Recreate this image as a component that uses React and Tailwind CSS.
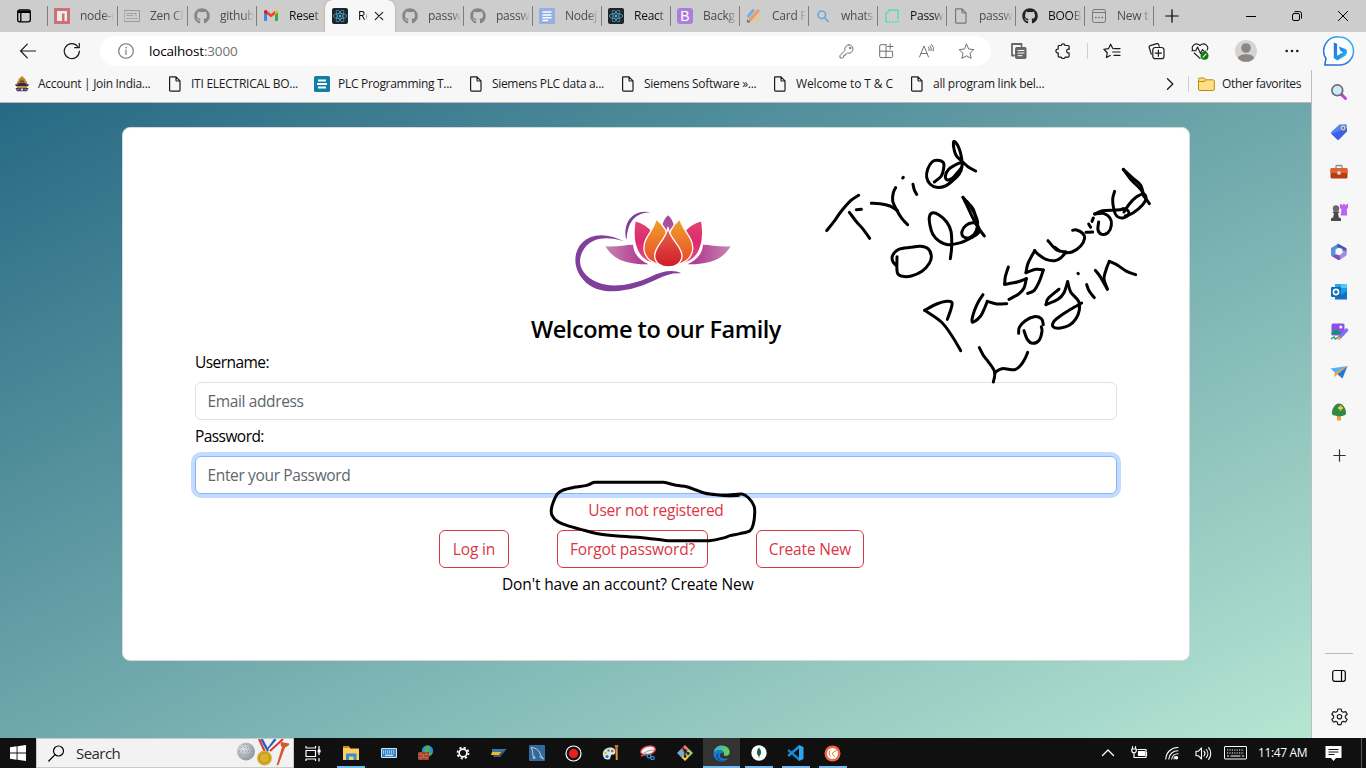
import React from "react";
import { FaGithub, FaReact } from "react-icons/fa";

/* Shared line-icon wrapper */
function Icon({ size = 16, box = 16, sw = 1, className = "", children }) {
  return (
    <svg
      width={size}
      height={size}
      viewBox={`0 0 ${box} ${box}`}
      fill="none"
      stroke="currentColor"
      strokeWidth={sw}
      strokeLinecap="round"
      strokeLinejoin="round"
      className={`shrink-0 ${className}`}
    >
      {children}
    </svg>
  );
}

const DocIcon = ({ className = "" }) => (
  <Icon sw={1.2} className={className}>
    <path d="M3 .8h6l4 4v9.4a1 1 0 0 1-1 1H3.600a1 1 0 0 1-1-1V1.600a.8.8 0 0 1 .4-.8zM9 .8v3.400a.8.8 0 0 0 .8.8H13" />
  </Icon>
);

/* ---------- tab favicons ---------- */
const Npm = () => (
  <Icon className="opacity-60">
    <path d="M0 0h16v16H0z" fill="#cb3837" stroke="none" />
    <path d="M3 3h10v10h-2.500V5.500H8V13H3z" fill="#fff" stroke="none" />
  </Icon>
);
const Zen = () => (
  <Icon className="text-[#999]">
    <rect x=".5" y="2.500" width="15" height="11" />
    <path d="M3 5.500h2M3 7.500h2M6.500 5.500h2M6.500 7.500h2M10 5.500h2v2M3 10.500h1.500M6 10.500h1M8.500 10.500H10M11.500 10.500H13" />
  </Icon>
);
const Git = () => <FaGithub className="h-4 w-4 text-[#858585]" />;
const GitDark = () => <FaGithub className="h-4 w-4 text-[#1f2328]" />;
const Gmail = () => (
  <Icon>
    <g stroke="none">
      <path d="M1 3.500l3 2.200V13H2a1 1 0 0 1-1-1z" fill="#4285f4" />
      <path d="M12 5.700l3-2.200V12a1 1 0 0 1-1 1h-2z" fill="#34a853" />
      <path d="M1 4c0-1.700 1.700-2.200 3-1.200L8 5.900l4-3.100v3.400L8 9.300 1 4.300z" fill="#ea4335" />
      <path d="M12 2.800c1.300-1 3-.5 3 1.200v.6l-3 2.100z" fill="#fbbc04" />
      <path d="M1 4c0-1.500 1.700-2.200 3-1.200v3.900L1 4.500z" fill="#c5221f" />
    </g>
  </Icon>
);
const ReactFav = () => (
  <span className="flex h-4 w-4 shrink-0 items-center justify-center rounded-[2px] bg-[#20232a]">
    <FaReact className="h-3.5 w-3.5 text-[#4fb8d4]" />
  </span>
);
const Docs = () => (
  <Icon sw={1.500}>
    <rect width="16" height="16" rx="1.500" fill="#93afe3" stroke="none" />
    <path d="M3.500 4h9M3.500 7h9M3.500 9.800h9M3.500 12.500h5.500" stroke="#fff" strokeLinecap="butt" />
  </Icon>
);
const Boot = () => (
  <span className="flex h-4 w-4 shrink-0 items-center justify-center rounded-[3px] bg-[#ab7edc] font-['Liberation_Sans',sans-serif] text-[14px] leading-none text-white">
    B
  </span>
);
const CardFav = () => (
  <Icon sw={3.200}>
    <path d="M2.500 8l4.500-5.500" stroke="#79aee0" />
    <path d="M4 12l8-9" stroke="#f09a63" />
    <path d="M8.500 13.500l3.500-3.700" stroke="#edc78f" />
    <path d="M1 11.200l3.300 3.300H2a1 1 0 0 1-1-1z" fill="#5a5a86" stroke="none" />
  </Icon>
);
const SearchFav = () => (
  <Icon sw={1.700} className="text-[#74a6d3]">
    <circle cx="6.800" cy="6.800" r="3.800" />
    <path d="M9.800 9.800l3.400 3.600" />
  </Icon>
);
const GreenFav = () => (
  <Icon sw={2} className="text-[#6bdcab]">
    <path d="M2 14V5.500L5.500 2H14v8" strokeDasharray="5 .6" strokeLinecap="butt" />
    <path d="M2 14h12v-4" strokeDasharray="1.500 1.500" strokeLinecap="butt" />
  </Icon>
);
const NewTab = () => (
  <Icon className="text-[#777]">
    <rect x="1.500" y="1.500" width="13" height="13" rx="2" />
    <path d="M1.500 4.500h13" />
    <path d="M4.500 9.500h.6M7.700 9.500h.6M10.900 9.500h.6" strokeWidth="1.500" />
  </Icon>
);

const tabs = [
  { icon: <Npm />, text: "node-c", w: "w-[70px]", sep: true },
  { icon: <Zen />, text: "Zen Cl", w: "w-[70px]", sep: true },
  { icon: <Git />, text: "github", w: "w-[69px]", sep: true },
  { icon: <Gmail />, text: "Reset", w: "w-[69px]", sep: true, live: true },
  { icon: <ReactFav />, text: "Re", w: "w-[70px]", active: true },
  { icon: <Git />, text: "passw", w: "w-[68px]" },
  { icon: <Git />, text: "passw", w: "w-[69px]", sep: true },
  { icon: <Docs />, text: "Nodej", w: "w-[69px]", sep: true },
  { icon: <ReactFav />, text: "React", w: "w-[69px]", sep: true, live: true },
  { icon: <Boot />, text: "Backg", w: "w-[69px]", sep: true },
  { icon: <CardFav />, text: "Card F", w: "w-[69px]", sep: true },
  { icon: <SearchFav />, text: "whats", w: "w-[69px]", sep: true },
  { icon: <GreenFav />, text: "Passw", w: "w-[69px]", sep: true, live: true },
  { icon: <DocIcon className="text-[#777]" />, text: "passw", w: "w-[69px]", sep: true },
  { icon: <GitDark />, text: "BOOB", w: "w-[69px]", sep: true, live: true },
  { icon: <NewTab />, text: "New t", w: "w-[69px]", sep: true },
];

function Tab({ tab }) {
  if (tab.active) {
    return (
      <div className="flex h-8 w-[70px] shrink-0 items-center rounded-t-lg bg-[#f7f7f7] pl-[7px] shadow-[0_0_2px_#999]">
        {tab.icon}
        <span className="ml-2.5 w-[13px] whitespace-nowrap text-[12px] tracking-[-0.2px] text-black [mask-image:linear-gradient(to_right,#000_45%,transparent_75%)]">
          {tab.text}
        </span>
        <Icon size={10} box={10} sw={1.200} className="ml-[3px] text-[#222]">
          <path d="M1.300 1.300l7.400 7.400M8.700 1.300L1.300 8.700" />
        </Icon>
      </div>
    );
  }
  return (
    <div className={`flex h-8 shrink-0 items-center ${tab.w}`}>
      <span className={`h-5 w-px ${tab.sep ? "bg-[#7d7d7d]" : "bg-transparent"}`} />
      <span className="ml-1.5 flex">{tab.icon}</span>
      <span
        className={`ml-2.5 w-[36px] whitespace-nowrap text-[12px] tracking-[-0.25px] [mask-image:linear-gradient(to_right,#000_65%,transparent_95%)] ${
          tab.live ? "text-[#111]" : "text-[#4c4c4c]"
        }`}
      >
        {tab.text}
      </span>
    </div>
  );
}

function TabStrip() {
  return (
    <div className="flex h-8 items-center bg-[#cdcdcd] text-[#222]">
      <div className="flex w-[47px] shrink-0 justify-center">
        <Icon sw={1.300} className="text-black">
          <rect x="1.700" y="1.800" width="12.600" height="12" rx="2" />
          <path d="M2 3.700h12" strokeWidth="2.600" strokeLinecap="butt" />
          <path d="M4.800 5v8.500" />
        </Icon>
      </div>
      {tabs.map((t, i) => (
        <Tab key={i} tab={t} />
      ))}
      <span className="h-5 w-px shrink-0 bg-[#7d7d7d]" />
      <Icon size={14} box={14} sw={1.200} className="ml-[11px] text-black">
        <path d="M7 .8v12.400M.8 7h12.400" />
      </Icon>
      <div className="ml-auto flex items-center gap-[36px] pr-[18px] text-black">
        <Icon size={10} box={10}>
          <path d="M0 5.500h10" />
        </Icon>
        <Icon size={10} box={10}>
          <rect x=".5" y="2.500" width="7" height="7" rx="1.500" />
          <path d="M2.800.6h4.700a2 2 0 0 1 2 2v4.600" />
        </Icon>
        <Icon size={10} box={10}>
          <path d="M.3.300l9.400 9.400M9.700.3L.3 9.700" />
        </Icon>
      </div>
    </div>
  );
}

/* ---------- address bar row ---------- */
const Cell = ({ children, w = "w-10" }) => (
  <span className={`flex shrink-0 items-center justify-center ${w}`}>{children}</span>
);

function BingLogo() {
  return (
    <svg width="32" height="32" viewBox="0 0 32 32" className="shrink-0">
      <defs>
        <linearGradient id="bingRing" x1="0" y1="1" x2="1" y2="0">
          <stop offset="0" stopColor="#2b62cf" />
          <stop offset=".5" stopColor="#2e86e8" />
          <stop offset="1" stopColor="#35c0f3" />
        </linearGradient>
        <linearGradient id="bingB" x1="0" y1="0" x2="1" y2="1">
          <stop offset="0" stopColor="#2a6be0" />
          <stop offset=".6" stopColor="#2295ee" />
          <stop offset="1" stopColor="#43d3f3" />
        </linearGradient>
      </defs>
      <path d="M16.500 2a14 14 0 1 1 0 28H1.800l1.200-6.500A14 14 0 0 1 16.500 2z" fill="#fdfeff" stroke="url(#bingRing)" strokeWidth="1.500" strokeLinejoin="round" />
      <path d="M10.800 7.500l3.300 1.200v12l6-3.400-2.600-1.300-1.800-4.400 6.700 2.500c2.500 1.200 2.200 5.300-.5 6.900l-7.600 4.400-3.500-2.400z" fill="url(#bingB)" />
    </svg>
  );
}

function Toolbar() {
  return (
    <div className="flex h-[38px] items-center bg-[#f7f7f7] text-[#1b1b1b]">
      <Cell w="w-14">
        <Icon size={16} sw={1.200}>
          <path d="M15.500 8H.8M7.300 1.200L.6 8l6.700 6.800" />
        </Icon>
      </Cell>
      <Cell w="w-8">
        <Icon size={18} box={18} sw={1.200}>
          <path d="M16.300 9.200A7.500 7.500 0 1 1 14.700 4.500M16.300 1.300v4.400h-4.600" />
        </Icon>
      </Cell>
      <div className="ml-3 flex h-[30px] w-[891px] shrink-0 items-center rounded-full bg-white text-[#707070]">
        <Icon size={16} sw={1.100} className="ml-[18px]">
          <circle cx="8" cy="8" r="7.300" />
          <path d="M8 7v4.500" />
          <path d="M8 4.500v.3" strokeWidth="1.400" />
        </Icon>
        <span className="ml-[15px] text-[13.5px] tracking-[-0.18px]">
          <span className="text-black">localhost</span>:3000
        </span>
        <div className="ml-auto flex pr-[5px]">
          <Cell>
            <Icon size={15} box={15}>
              <path d="M9.800.8a4.200 4.200 0 1 1-1.300 8.200L7.300 10.200H6v1.500H4.500v1.400L3.600 14H1v-2.500l5-5.200A4.200 4.200 0 0 1 9.800.8z" />
              <circle cx="11" cy="4" r=".8" />
            </Icon>
          </Cell>
          <Cell>
            <Icon>
              <path d="M8 1.700H3a1.300 1.300 0 0 0-1.300 1.300v10.300A1.300 1.300 0 0 0 3 14.600h10.300a1.300 1.300 0 0 0 1.300-1.300V8.200H1.700M8 1.700v12.900M12.200.8v5.400M9.500 3.500h5.400" />
            </Icon>
          </Cell>
          <Cell>
            <Icon size={17} box={17}>
              <path d="M1.500 14L6 3l4.500 11M3 10.500h6M10.500 4.200a3 3 0 0 1 .5 3.500M12 2.800a5 5 0 0 1 1 5M13.700 1.500a7 7 0 0 1 1.600 6.500" />
            </Icon>
          </Cell>
          <Cell>
            <Icon size={17} box={17}>
              <path d="M8.500 1.200l2.200 4.800 5.200.6-3.900 3.600 1.100 5.200-4.600-2.600-4.600 2.600L5 10.200 1.100 6.600 6.300 6z" />
            </Icon>
          </Cell>
        </div>
      </div>
      <Cell w="w-14">
        <Icon size={16} className="text-[#666]">
          <path d="M3 12.500H1V1h9.500v2" strokeWidth="1.800" />
          <rect x="4.500" y="4.500" width="10.500" height="11" rx="1" fill="#666" />
          <path d="M7 7.500h6M7 10h6M7 12.700h4" stroke="#fff" />
        </Icon>
      </Cell>
      <Cell w="w-8">
        <Icon size={16} sw={1.200}>
          <path d="M3.200 4.200V3.500a1 1 0 0 1 1-1h2a2 2 0 0 1 3.900 0h3a1 1 0 0 1 1 1v2.800a1.900 1.900 0 1 0 0 3.600v3.200a1 1 0 0 1-1 1h-3a2 2 0 0 1-3.900 0h-2a1 1 0 0 1-1-1v-3.200a1.900 1.900 0 1 1 0-3.700z" />
        </Icon>
      </Cell>
      <span className="mx-[8px] h-4 w-px bg-[#cfcfcf]" />
      <Cell w="w-8">
        <Icon size={18} box={18} sw={1.200}>
          <path d="M9.800 6.500L7.600 2.200 5.500 6.700l-4.700.6 3.500 3.400-.9 4.900 3.800-2.200M11 6.700h6M9.700 10h7.300M11 13.400h6" />
        </Icon>
      </Cell>
      <Cell w="w-14">
        <Icon size={17} box={17} sw={1.200}>
          <path d="M3.300 11.200L1.200 4.500a1.500 1.500 0 0 1 1-1.900l6.600-2a1.500 1.500 0 0 1 1.900 1l.5 1.700" />
          <rect x="4.800" y="4.500" width="11.200" height="11.200" rx="2.500" />
          <path d="M10.400 7.200v6M7.400 10.200h6" />
        </Icon>
      </Cell>
      <Cell w="w-8">
        <Icon size={18} box={18} sw={1.100}>
          <path d="M1.800 8C-.3 4 4.500-.3 9 3.500 13.500-.3 18.300 4 16.200 8M3.200 11L9 16.300M.8 8.800h4L6.600 5l2.900 6.500 2-4 1.300 1.800H15" />
          <circle cx="13.500" cy="13.700" r="4" fill="#107c10" stroke="none" />
          <path d="M12 15.200l3-3" stroke="#fff" />
        </Icon>
      </Cell>
      <Cell w="w-[60px]">
        <svg width="22" height="22" viewBox="0 0 22 22">
          <circle cx="11" cy="11" r="11" fill="#d6d4d1" />
          <circle cx="11" cy="8" r="4.800" fill="#8a8784" />
          <path d="M2.800 18.200C4 13 18 13 19.200 18.200A11 11 0 0 1 2.800 18.200z" fill="#8a8784" />
        </svg>
      </Cell>
      <Cell w="w-8">
        <Icon size={14} box={14}>
          <g fill="#1b1b1b" stroke="none">
            <circle cx="1.700" cy="7" r="1.300" />
            <circle cx="7" cy="7" r="1.300" />
            <circle cx="12.300" cy="7" r="1.300" />
          </g>
        </Icon>
      </Cell>
      <div className="ml-auto flex pr-[11px]">
        <BingLogo />
      </div>
    </div>
  );
}

/* ---------- favourites bar ---------- */
const Crest = () => (
  <Icon>
    <g stroke="none">
      <path d="M7 .5h2l1 2h1.500L11 4.500h1l1.500 3.500h-11L4 4.500h1L4.500 2.500H6z" fill="#b7832b" />
      <path d="M6 4.500h4v2H6z" fill="#6f4b1c" />
      <path d="M1 8.200h2.500L5 7h6l1.500 1.200H15l-1 2H2z" fill="#2b2a5a" />
      <path d="M3 10h10v2H3z" fill="#c38d31" />
      <path d="M1.500 12h13l-1.500 3.200H3z" fill="#3f3b6b" />
      <path d="M3.500 13h2v1h-2zM10.500 13h2v1h-2z" fill="#c77" />
      <path d="M7 12.500h2v2H7z" fill="#ddd" />
    </g>
  </Icon>
);
const PlcIcon = () => (
  <Icon sw={1.800}>
    <rect width="16" height="16" rx="1.500" fill="#0f7fa8" stroke="none" />
    <path d="M4 4.500h8M3 8h10M4 11.500h8" stroke="#fff" strokeLinecap="butt" />
  </Icon>
);

const bookmarks = [
  { icon: <Crest />, text: "Account | Join India...", w: "w-[153px]", t: "tracking-[-0.3px]" },
  { icon: <DocIcon />, text: "ITI ELECTRICAL BO...", w: "w-[147px]", t: "tracking-[-0.25px]" },
  { icon: <PlcIcon />, text: "PLC Programming T...", w: "w-[154px]", t: "tracking-[-0.3px]" },
  { icon: <DocIcon />, text: "Siemens PLC data a...", w: "w-[152px]", t: "tracking-[-0.33px]" },
  { icon: <DocIcon />, text: "Siemens Software »...", w: "w-[152px]", t: "tracking-[-0.3px]" },
  { icon: <DocIcon />, text: "Welcome to T & C", w: "w-[137px]", t: "tracking-[-0.1px]" },
  { icon: <DocIcon />, text: "all program link bel...", w: "w-[153px]", t: "tracking-[-0.25px]" },
];

function Bookmarks() {
  return (
    <div className="flex h-[33px] items-center border-b border-[#b9b9b9] bg-[#f7f7f7] pb-1 pl-[14px] text-[12px] text-[#1b1b1b]">
      {bookmarks.map((b) => (
        <div key={b.text} className={`flex shrink-0 items-center gap-2 whitespace-nowrap ${b.w} ${b.t}`}>
          {b.icon}
          <span>{b.text}</span>
        </div>
      ))}
      <div className="ml-auto flex items-center">
        <Icon size={12} box={12} sw={1.300}>
          <path d="M3.500.8L8.800 6l-5.300 5.200" />
        </Icon>
        <span className="ml-[12px] h-4 w-px bg-[#cfcfcf]" />
        <svg width="17" height="16" viewBox="0 0 17 16" className="ml-[9px]">
          <path d="M.5 3.500a1.500 1.500 0 0 1 1.500-1.500h4l1.800 1.800h7a1.500 1.500 0 0 1 1.500 1.500v7.700a1.500 1.500 0 0 1-1.500 1.500H2a1.500 1.500 0 0 1-1.500-1.500z" fill="#ffdf82" stroke="#b98a16" />
          <path d="M.8 5.500h5.500l1.600-1.500" fill="#f0bd3f" stroke="#b98a16" />
        </svg>
        <span className="ml-[7px] w-[89px] whitespace-nowrap tracking-[-0.35px]">Other favorites</span>
      </div>
    </div>
  );
}

/* ---------- login page ---------- */
function Lotus() {
  return (
    <svg width="190" height="110" viewBox="0 0 570 330" className="mx-auto -translate-x-px">
      <defs>
        <linearGradient id="red" x1="0" y1="0" x2="0" y2="1">
          <stop offset="0" stopColor="#e8664a" />
          <stop offset="1" stopColor="#cf1a2c" />
        </linearGradient>
        <linearGradient id="orange" x1="0" y1="0" x2="0" y2="1">
          <stop offset="0" stopColor="#f0a32a" />
          <stop offset="1" stopColor="#e9472b" />
        </linearGradient>
        <linearGradient id="pink" x1="0" y1="0" x2="0" y2="1">
          <stop offset="0" stopColor="#e2456f" />
          <stop offset=".5" stopColor="#dc2a70" />
          <stop offset="1" stopColor="#dd4f7f" />
        </linearGradient>
        <linearGradient id="leafL" x1="0" y1="0" x2="1" y2="0">
          <stop offset="0" stopColor="#c685b5" />
          <stop offset="1" stopColor="#ae2c87" />
        </linearGradient>
        <linearGradient id="leafR" x1="1" y1="0" x2="0" y2="0">
          <stop offset="0" stopColor="#c685b5" />
          <stop offset="1" stopColor="#ae2c87" />
        </linearGradient>
        <linearGradient id="tip" x1="0" y1="0" x2="0" y2="1">
          <stop offset="0" stopColor="#a2489a" />
          <stop offset="1" stopColor="#c06aab" />
        </linearGradient>
      </defs>
      <path d="M192 124C140 98 92 100 65 130C38 160 40 206 70 239C104 281 172 280 230 262C290 243 318 215 364 220C340 208 310 212 270 231C210 258 150 264 110 246C62 224 50 186 68 154C88 114 136 106 192 124z" fill="#7f3f9b" />
      <path d="M198 116C188 66 220 26 272 37C228 38 204 62 200 116z" fill="#7f3f9b" />
      <path d="M136 139C170 142 196 134 219 134C221 160 236 180 266 193C206 194 162 182 136 139z" fill="url(#leafL)" />
      <path d="M512 139C478 142 452 134 429 134C427 160 412 180 382 193C442 194 486 182 512 139z" fill="url(#leafR)" />
      <path d="M324 46C306 64 304 84 304 100L324 140L344 100C344 84 342 62 324 46z" fill="url(#tip)" />
      <g stroke="#fff" strokeWidth="4" strokeLinejoin="round">
        <path d="M225 62C248 68 266 80 280 98L284 190C234 184 214 132 225 62z" fill="url(#pink)" />
        <path d="M425 62C402 68 384 80 370 98L366 190C416 184 436 132 425 62z" fill="url(#pink)" />
        <path d="M288 57C283 92 248 112 252 150C256 174 272 188 300 194L326 130C326 96 308 72 288 57z" fill="url(#orange)" />
        <path d="M360 57C367 92 402 112 398 150C394 174 378 188 350 194L322 130C324 96 342 72 360 57z" fill="url(#orange)" />
        <path d="M324 82C318 120 283 138 284 168C286 212 364 212 366 168C366 138 330 120 324 82z" fill="url(#red)" />
      </g>
    </svg>
  );
}

const fieldBase =
  "mt-2 block h-[38px] w-full rounded-md border bg-white px-[11.5px] text-[15.5px] text-[#212529] outline-none placeholder:text-[#60666c]";
const btn = "h-[38px] rounded-md border border-[#dc3545] text-[15.5px] tracking-[-0.17px] text-[#dc3545]";

function LoginCard() {
  return (
    <div className="h-[534px] w-[1068px] shrink-0 rounded-lg border border-[#d5d9d9] bg-white px-[72px] pt-[72px] text-[15.5px] leading-6 text-black">
      <Lotus />
      <h1 className="mt-px mb-[3px] text-center text-[23.5px] leading-9 font-semibold tracking-[-0.48px]">
        Welcome to our Family
      </h1>
      <label className="block tracking-[-0.55px]">Username:</label>
      <input className={`${fieldBase} border-[#dee2e6] tracking-[-0.37px]`} placeholder="Email address" />
      <label className="mt-1 block tracking-[-0.57px]">Password:</label>
      <input
        className={`${fieldBase} border-[#86b7fe] tracking-[-0.35px] shadow-[0_0_0_4px_#c2dbfe]`}
        placeholder="Enter your Password"
      />
      <p className="mt-1 text-center tracking-[-0.23px] text-[#dc3545]">User not registered</p>
      <div className="mt-2 flex gap-12 pl-[244px]">
        <button className={`${btn} w-[70px]`}>Log in</button>
        <button className={`${btn} w-[151px]`}>Forgot password?</button>
        <button className={`${btn} w-[108px]`}>Create New</button>
      </div>
      <p className="mt-1 pl-[307px] tracking-[-0.13px]">Don't have an account? Create New</p>
    </div>
  );
}

/* Freehand pen marks laid over the page; each stroke is a list of x,y samples */
const noteStrokes = [
  "176 196 152 212 122 246 104 272 80 302",
  "148 247 170 276 188 296 209 325",
  "169 239 184 238",
  "214 220 240 221 270 228 293 242",
  "287 173 280 188 278 212 290 240 306 266 323 284",
  "308 144 310 142",
  "339 163 343 180 350 193",
  "403 156 424 138 431 115 430 98 412 91 396 96 383 118 380 142 390 162 410 172 436 168 458 152 478 132 486 110 482 98 464 106 446 118 436 138 442 150 458 144 474 126 486 108 484 80 476 52 462 34 461 52 468 76 484 92 504 110 527 123",
  "451 386 455 350 453 304 440 276 416 254 396 249 388 262 390 286 398 312 416 332 444 344 482 338 512 324 536 308 532 284 518 278 498 286 486 304 490 320 510 322 528 304 532 272 514 234 489 202",
  "489 202 512 250 530 286 553 318",
  "500 214 520 238 530 276",
  "291 380 292 428 308 439 334 438 366 424 388 400 394 378 384 356 362 349 332 352 296 358 278 376 278 394 288 406",
  "482 662 456 618 424 576 374 541",
  "374 541 410 522 440 514 456 518 452 540 442 568",
  "549 494 536 514 524 540 516 570 521 576 542 558 554 534 562 514",
  "562 514 590 522 620 521",
  "627 508 656 492 672 474 679 446",
  "679 446 652 456 614 463",
  "614 463 616 440 625 411",
  "683 490 702 482 718 454 730 420",
  "730 420 708 418 678 428",
  "678 428 684 400 704 362",
  "704 362 716 374 738 388 764 392 782 384 798 366",
  "798 366 770 360 744 332",
  "764 352 778 362",
  "792 368 816 366 842 348 854 324 848 310 830 300 818 301",
  "858 307 878 306",
  "866 282 872 292",
  "876 274 880 264",
  "896 276 894 300 906 313 924 308 934 286 930 264 910 250 884 252",
  "884 252 908 242 950 240 978 236",
  "944 184 938 208 942 240 950 258 968 264 986 254 982 240 968 236",
  "976 258 1000 248 1028 224 1038 204 1030 192 1008 202 988 222 972 246",
  "970 118 994 150 1022 178 1034 200 1048 221",
  "970 118 1000 146 1022 166 1032 200",
  "538 653 550 676 564 694 584 726 580 756",
  "584 728 606 716 644 719 662 706 674 688 683 667",
  "656 610 658 592 676 572 702 560 724 566 730 584",
  "672 602 682 628 698 640 718 630 726 604 724 590",
  "803 455 792 488 774 508 738 524",
  "738 524 744 506 774 480 776 478",
  "803 455 812 486 836 514 838 540 828 566 808 586 782 594 760 591 762 574 786 554 812 538 845 519",
  "860 464 868 484 883 503",
  "834 430 835 431",
  "886 421 902 442 922 478",
  "922 476 912 446 920 414 928 394",
  "928 394 950 404 980 424 1007 434",
];
const circleStrokes = [
  "956 76 925 77 894 75 856 70 828 60 800 50 768 46 730 37 690 37 630 37 560 37 524 37 500 46 462 52 430 60 412 72 400 96 394 118 396 136 412 154 440 166 482 178 538 192 606 199 668 203 744 212 800 212 868 212 914 203 930 197 960 191 990 182 1000 162 1004 132 1002 108 986 84 966 72 930 75 900 76",
];

/* Catmull-Rom spline through the samples, written as cubic segments */
function spline(samples) {
  const n = samples.split(" ").map(Number);
  const p = [];
  for (let i = 0; i < n.length; i += 2) p.push([n[i], n[i + 1]]);
  let d = `M${p[0][0]} ${p[0][1]}`;
  for (let i = 0; i < p.length - 1; i++) {
    const a = p[i - 1] || p[i];
    const b = p[i];
    const c = p[i + 1];
    const e = p[i + 2] || c;
    d += `C${b[0] + (c[0] - a[0]) / 6} ${b[1] + (c[1] - a[1]) / 6} ${c[0] - (e[0] - b[0]) / 6} ${c[1] - (e[1] - b[1]) / 6} ${c[0]} ${c[1]}`;
  }
  return d;
}

function Ink() {
  return (
    <svg
      width="1366"
      height="768"
      className="pointer-events-none absolute top-0 left-0"
      fill="none"
      stroke="#000"
      strokeWidth="9"
      strokeLinecap="round"
      strokeLinejoin="round"
    >
      <g transform="translate(800 130) scale(.33333)">
        {noteStrokes.map((s, i) => (
          <path key={i} d={spline(s)} />
        ))}
      </g>
      <g transform="translate(420 470) scale(.33333)">
        {circleStrokes.map((s, i) => (
          <path key={i} d={spline(s)} />
        ))}
      </g>
    </svg>
  );
}

/* ---------- Edge sidebar ---------- */
const sideIcons = [
  <svg key="s" width="18" height="18" viewBox="0 0 18 18">
    <path d="M11 11l4.500 4.500" stroke="#c33ef0" strokeWidth="3" strokeLinecap="round" />
    <path d="M11 11l1.500 1.500" stroke="#6d6f73" strokeWidth="2.500" />
    <circle cx="7.300" cy="7.300" r="5.400" fill="#cdeafb" stroke="#6d6f73" strokeWidth="1.700" />
  </svg>,
  <svg key="t" width="18" height="18" viewBox="0 0 18 18">
    <path d="M9.500 1.500l6-.2c1 0 1.300.6 1.300 1.500v5.500l-7.600 8c-.7.700-1.500.700-2.200 0L1.500 11c-.7-.7-.7-1.600 0-2.300z" fill="#4f86f6" />
    <path d="M1.500 11L17 5v3.300l-7.800 8c-.7.700-1.500.700-2.200 0z" fill="#3f5fe6" />
    <circle cx="13.200" cy="5" r="1.800" fill="#4a74f4" stroke="#ffd76b" strokeWidth="1.200" />
  </svg>,
  <svg key="b" width="18" height="18" viewBox="0 0 18 18">
    <path d="M6 5V3.500a1 1 0 0 1 1-1h4a1 1 0 0 1 1 1V5" fill="none" stroke="#8b8f94" strokeWidth="1.400" />
    <rect x=".5" y="5" width="17" height="10.500" rx="1.500" fill="#b83c12" />
    <path d="M.5 6.500A1.500 1.500 0 0 1 2 5h14a1.500 1.500 0 0 1 1.500 1.500V10H.5z" fill="#e0622e" />
    <circle cx="9" cy="9.900" r="1.900" fill="#d5d7da" />
  </svg>,
  <svg key="c" width="18" height="18" viewBox="0 0 18 18">
    <path d="M10 1h1.800v1.300h1.200V1h2v1.300h1.200V1H18v4l-1.300 1.200.5 6.300H10.800l.6-6.300L10 5z" fill="#c061f2" />
    <circle cx="6" cy="5.500" r="3.200" fill="#6a6a6e" />
    <path d="M2.800 8.500h6.400v1.300l-1.200.4.800 4 2.200 1.200v2.600H1v-2.600l2.200-1.200.8-4-1.200-.4z" fill="#4a4a4e" />
  </svg>,
  <svg key="m" width="18" height="18" viewBox="0 0 18 18">
    <path d="M8 .8L1 5v7.500l3 1.800 1.500-2.800v-5L11.500 3z" fill="#5793dd" />
    <path d="M8 .8l8.500 4.500v5L12.500 8V6L7 4z" fill="#4558b0" />
    <path d="M16.500 8v4.500L9.500 17l-4-2 1-3.500 3 .5 3.300-2.500V7z" fill="#a78bdd" />
    <path d="M2 13.200l4-2 3.500 1.500 1 3.500-2 1z" fill="#7a54bc" />
    <circle cx="9" cy="9" r="2.800" fill="#f7f7f7" />
  </svg>,
  <svg key="o" width="18" height="18" viewBox="0 0 18 18">
    <path d="M5 1h12v15H5z" fill="#1c9de3" />
    <path d="M5 1h6v4H5z" fill="#28a8ea" />
    <path d="M11 1h6v4h-6z" fill="#50c9f7" />
    <path d="M5 8l6 4 6-4v8.500H5z" fill="#1272bf" />
    <rect x="1" y="4" width="10" height="10" rx="1" fill="#0f6cbd" />
    <circle cx="6" cy="9" r="2.600" fill="none" stroke="#fff" strokeWidth="1.600" />
  </svg>,
  <svg key="p" width="19" height="18" viewBox="0 0 19 18">
    <rect x="1.500" y=".5" width="13" height="12" rx="1.500" fill="#8a52e6" />
    <circle cx="10.800" cy="4" r="1.500" fill="#fff" />
    <path d="M1.500 10l5-4 6 5.500H1.500z" fill="#17936a" />
    <path d="M1 16l3-2 1.500 2 3-2" fill="none" stroke="#17a087" strokeWidth="1.400" />
    <path d="M9.500 14.500l7-7.500" stroke="#8070ee" strokeWidth="3.400" strokeLinecap="round" />
    <path d="M8 16.500l2.800-.7-2-2z" fill="#f4b02e" stroke="#f4b02e" />
  </svg>,
  <svg key="d" width="18" height="16" viewBox="0 0 18 16">
    <path d="M.5 4.500L17.500 2 6 9.500z" fill="#52b3f4" />
    <path d="M17.500 2L12.500 14.500 7 10z" fill="#2379d3" />
    <path d="M17.500 2L4.500 9v4.500l2.500-3z" fill="#f0a733" />
  </svg>,
  <svg key="r" width="18" height="18" viewBox="0 0 18 18">
    <path d="M7 12h4v5.500H7z" fill="#efa233" />
    <path d="M9 .5C13.500 .5 16.500 7 16 10.500c-.5 3.700-13.500 3.700-14 0C1.500 7 4.500 .5 9 .5z" fill="#2f8a45" />
    <path d="M10.500 2.500v5M8 5h5" stroke="#ffc53f" strokeWidth="2" />
  </svg>,
];

function Sidebar() {
  return (
    <div className="flex w-[55px] shrink-0 flex-col items-center border-l border-[#bdbdbd] bg-[#f7f7f7] pt-[2px]">
      {sideIcons.map((ic, i) => (
        <span key={i} className="flex h-10 items-center justify-center">
          {ic}
        </span>
      ))}
      <span className="mt-[3px] flex h-10 items-center text-[#333]">
        <Icon size={13} box={13} sw={1.200}>
          <path d="M6.500.8v11.400M.8 6.500h11.400" />
        </Icon>
      </span>
      <span className="mt-auto h-px w-7 bg-[#bbb]" />
      <span className="mt-[2px] flex h-10 items-center text-black">
        <Icon size={14} box={14} sw={1.200}>
          <rect x=".7" y="1.500" width="12.600" height="10.800" rx="2" />
          <path d="M9.500 1.800v10.300" />
        </Icon>
      </span>
      <span className="mb-[2px] flex h-10 items-center text-[#1b1b1b]">
        <Icon size={19} box={24} sw={1.500}>
          <path d="M10 2.500h4l.7 3 2 1.200 3-.9 2 3.400-2.300 2.100v2.200l2.300 2.100-2 3.400-3-.9-2 1.200-.7 3h-4l-.7-3-2-1.200-3 .9-2-3.400 2.300-2.100v-2.200L2.300 9.200l2-3.400 3 .9 2-1.200z" />
          <circle cx="12" cy="12.300" r="2.800" />
        </Icon>
      </span>
    </div>
  );
}

/* ---------- taskbar ---------- */
const taskIcons = [
  {
    w: "w-[38px]",
    icon: (
      <Icon size={17} box={17} sw={1.200} className="text-white">
        <path d="M1 1v2h9.500V1M1 16v-2h9.500v2M1 5.500h9.500v6H1zM14 1v9M14 13v3.500" strokeLinecap="butt" />
        <path d="M13.200 5h1.800v2h-1.800z" fill="#fff" />
      </Icon>
    ),
  },
  {
    w: "w-[38px]",
    open: true,
    icon: (
      <svg width="17" height="16" viewBox="0 0 17 16">
        <path d="M0 2h6l1.500 1.500H16V15H0z" fill="#fbd05c" />
        <path d="M0 1h6l1 2H0z" fill="#c98d18" />
        <path d="M3 8.500h10.500V15h-3v-3.500H6V15H3z" fill="#2d8fd9" />
      </svg>
    ),
  },
  {
    icon: (
      <svg width="16" height="10" viewBox="0 0 16 10">
        <rect width="16" height="10" rx="1" fill="#cfe5f8" />
        <rect x="1" y="1" width="14" height="8" fill="#2f86cf" />
        <path d="M2 3h12M2 5h12" stroke="#fff" strokeDasharray="1 1" />
        <path d="M4 7.300h8" stroke="#fff" />
      </svg>
    ),
  },
  {
    icon: (
      <svg width="16" height="17" viewBox="0 0 16 17">
        <circle cx="9.500" cy="6" r="5.700" fill="#2c8fd6" />
        <path d="M8 1c4-1 5 2 3 4s3 1 3 4l-4 2-4-4z" fill="#4db24a" />
        <path d="M0 7h11v8H0z" fill="#9b3d29" />
        <path d="M0 9.700h11M0 12.300h11M3 7v2.700M8 7v2.700M5.500 9.700v2.600M3 12.300V15M8 12.300V15" stroke="#d98c76" strokeWidth=".6" />
      </svg>
    ),
  },
  {
    icon: (
      <svg width="14" height="14" viewBox="0 0 14 14" fill="none" stroke="#fff">
        <circle cx="7" cy="7" r="3.900" strokeWidth="1.700" />
        <circle cx="7" cy="7" r="5.500" strokeWidth="1.800" strokeDasharray="2.100 2.220" />
      </svg>
    ),
  },
  {
    icon: (
      <svg width="17" height="10" viewBox="0 0 17 10">
        <path d="M1 1h15l-4 3H1z" fill="#41749c" />
        <path d="M1 4h10l-3 3H0z" fill="#f3b62c" />
        <path d="M11 3h3l-5 6H2l1-2h5z" fill="#365f80" />
      </svg>
    ),
  },
  {
    icon: (
      <svg width="16" height="16" viewBox="0 0 16 16" fill="none">
        <rect width="16" height="16" rx="1" fill="#33699a" />
        <path d="M4.500 14l-1-8L2 2.500l3 .5c4 1 6 4 7 8l2.500 3-4-2.500M6 14l-.5-3" stroke="#c6dae8" strokeWidth=".9" />
      </svg>
    ),
  },
  {
    icon: (
      <svg width="17" height="17" viewBox="0 0 17 17">
        <circle cx="8.500" cy="8.500" r="7.500" fill="#111" stroke="#fff" strokeWidth="1.200" />
        <circle cx="8.500" cy="8.500" r="4.700" fill="#e5201d" />
      </svg>
    ),
  },
  {
    icon: (
      <svg width="17" height="16" viewBox="0 0 17 16">
        <path d="M8 2.500c5 0 6 3 5 6-1 2-3 0-4 2s0 4.500-4 4C-1 13.500-1 3 8 2.500z" fill="#d5e8ee" />
        <circle cx="3.500" cy="8" r="1.300" fill="#e5b43c" />
        <circle cx="6.500" cy="5.500" r="1.300" fill="#4a9e47" />
        <circle cx="10.300" cy="6" r="1.300" fill="#d14a35" />
        <circle cx="5" cy="11.500" r="1.600" fill="#2b73c5" />
        <path d="M12.500 0h4l-1 4h-2z" fill="#b57a43" />
        <path d="M13.500 4h2l.3 11h-2z" fill="#e8912e" />
      </svg>
    ),
  },
  {
    icon: (
      <svg width="17" height="16" viewBox="0 0 17 16">
        <ellipse cx="9" cy="5.500" rx="7.500" ry="4.300" fill="#f3f3f3" stroke="#d8343a" strokeWidth="1.400" transform="rotate(-15 9 5.500)" />
        <path d="M3 9l6-3 6-1" stroke="#888" strokeWidth=".8" fill="none" />
        <circle cx="10" cy="11" r="1.900" fill="none" stroke="#2f8fd0" strokeWidth="1.300" />
        <circle cx="13.500" cy="13" r="1.700" fill="none" stroke="#2f8fd0" strokeWidth="1.300" />
        <path d="M2 11l6-2" stroke="#c74b4b" strokeWidth="1.500" />
      </svg>
    ),
  },
  {
    icon: (
      <svg width="16" height="16" viewBox="0 0 16 16">
        <path d="M8 0l4 4-4 4-4-4z" fill="#ef7c6d" />
        <path d="M12 4l4 4-4 4-4-4z" fill="#a5d36c" />
        <path d="M4 4l4 4-4 4-4-4z" fill="#75a9e2" />
        <path d="M8 8l4 4-4 4-4-4z" fill="#f3cf5e" />
        <path d="M5.500 2.500l2.500 3v6M8 5.500l3 3" stroke="#222" strokeWidth="1.400" fill="none" />
        <circle cx="8" cy="5.500" r="1.400" fill="#222" />
        <circle cx="8" cy="11.500" r="1.400" fill="#222" />
        <circle cx="11.200" cy="8.500" r="1.400" fill="#222" />
      </svg>
    ),
  },
  {
    open: true,
    current: true,
    icon: (
      <svg width="17" height="17" viewBox="0 0 17 17">
        <defs>
          <linearGradient id="edgeA" x1="0" y1="0" x2="1" y2=".3">
            <stop offset="0" stopColor="#2ea8e0" />
            <stop offset="1" stopColor="#63d35c" />
          </linearGradient>
        </defs>
        <path d="M.6 8C1 3 4.500.4 8.700.4c5 0 8 3.400 8 6.600 0 3-2.500 4.200-5 3.800-1.400-.3-1.300-1-.8-1.600C11.500 7 9 5.200 6.500 5.200 3.500 5.200 1.200 7 .6 8z" fill="url(#edgeA)" />
        <path d="M.5 8.500C1.500 6 4 5 6.500 5.200c2.500 0 4.300 1.500 4.300 3C9 7 6.500 8.500 7 11c.5 2.700 4.500 3.700 8.300 2C12 18 3.500 17.500 1.200 12A8 8 0 0 1 .5 8.500z" fill="#1a7fd4" />
        <path d="M6.200 7.500c-2.200 3 .3 8.200 5.800 8.200C6 18.500 1.500 13 3.500 9.500c.7-1.200 1.800-1.800 2.700-2z" fill="#1356a8" />
      </svg>
    ),
  },
  {
    open: true,
    icon: (
      <svg width="16" height="16" viewBox="0 0 16 16">
        <circle cx="8" cy="8" r="7.700" fill="#fff" />
        <path d="M8 2.500c2.600 3 2.800 6.300.3 8.700V13h-.6v-1.800C5.200 8.800 5.400 5.500 8 2.500z" fill="#116149" />
      </svg>
    ),
  },
  {
    open: true,
    icon: (
      <svg width="17" height="16" viewBox="0 0 17 16">
        <path d="M12 0l4.500 2v12L12 16z" fill="#2aa5ee" />
        <path d="M1.800 4L12 12.500V16L.5 6z" fill="#1583cf" />
        <path d="M1.800 12L12 3.500V0L.5 10z" fill="#1a8fdc" />
      </svg>
    ),
  },
  {
    open: true,
    icon: (
      <svg width="17" height="17" viewBox="0 0 17 17" fill="none">
        <circle cx="8.500" cy="8.500" r="8" fill="#ef6a3c" />
        <circle cx="8.500" cy="8.500" r="5.500" fill="#fff" />
        <path d="M13 4.500L8 8.500l2.500 3M6 5.500a4 4 0 0 0 1 6" stroke="#ef6a3c" />
      </svg>
    ),
  },
];

function Taskbar() {
  return (
    <div className="flex h-[30px] items-stretch bg-[#101010] text-white">
      <div className="flex w-9 items-center justify-center">
        <svg width="16" height="16" viewBox="0 0 16 16" fill="#fff">
          <path d="M0 2.200L6.600 1.300v6.200H0zM7.500 1.200L16 0v7.500H7.500zM0 8.400h6.600v6.300L0 13.800zM7.500 8.400H16V16l-8.500-1.200z" />
        </svg>
      </div>
      <div className="flex w-[258px] shrink-0 items-center overflow-hidden border border-[#c9c9c9] bg-[#f2f2f2] pl-[11px] text-[#2b2b2b]">
        <Icon size={17} box={17} sw={1.200} className="text-black">
          <circle cx="10.500" cy="6" r="5" />
          <path d="M7 9.700L.8 16" />
        </Icon>
        <span className="ml-[11px] text-[15px] tracking-[-0.55px]">Search</span>
        <svg width="54" height="28" viewBox="0 0 54 28" className="ml-auto mr-[3px]">
          <defs>
            <radialGradient id="golf" cx=".35" cy=".35" r=".7">
              <stop offset="0" stopColor="#dfe2e6" />
              <stop offset="1" stopColor="#8c939c" />
            </radialGradient>
          </defs>
          <circle cx="10" cy="12.500" r="9" fill="url(#golf)" />
          <path d="M5 8.500h10M3 12h14M4 15.500h12M7 5.500h6" stroke="#8f969f" strokeDasharray="1 2" />
          <path d="M23 0l6 13" stroke="#d93636" strokeWidth="2" />
          <path d="M25.500 0l6 11 8-11" stroke="#2661c4" strokeWidth="2.500" fill="none" />
          <path d="M33 11L43 0" stroke="#f5f5f5" strokeWidth="2" />
          <path d="M34 12L47 0" stroke="#d93636" strokeWidth="2" />
          <circle cx="28.500" cy="19" r="7.500" fill="#d9b02f" />
          <circle cx="28.500" cy="19" r="5.300" fill="none" stroke="#b98a1b" />
          <path d="M45 3l8 1.500c1 2-2 3-4 4L42.500 26l-2 .5L46 8c-1-1-2-3-1-5z" fill="#d9542f" />
        </svg>
      </div>
      <div className="flex">
        {taskIcons.map((t, i) => (
          <div key={i} className={`flex flex-col items-center ${t.w || "w-[37px]"} ${t.current ? "bg-[#333]" : ""}`}>
            <span className="flex h-7 items-center pt-[2px]">{t.icon}</span>
            {t.open && <span className={`h-0.5 bg-[#76b9ed] ${t.current ? "w-full" : "w-7"}`} />}
          </div>
        ))}
      </div>
      <div className="ml-auto flex items-center">
        <Cell w="w-8">
          <Icon size={14} box={14} sw={1.300} className="translate-x-px">
            <path d="M1.500 9.500L7 4l5.500 5.500" />
          </Icon>
        </Cell>
        <Cell w="w-8">
          <Icon size={17} box={17} sw={1.200}>
            <path d="M7 4.500h8v8H5M15.500 7v3.500" />
            <path d="M7.500 6.500h6v4h-6z" fill="#fff" />
            <path d="M1.500 1.500v2.500M4.500 1.500v2.500M.8 4h4.500v1.500a2 2 0 0 1-4.500 0zM3 8v4.500h2" />
          </Icon>
        </Cell>
        <Cell w="w-[34px]">
          <Icon size={14} box={14} sw={1.100}>
            <path d="M.8 13A12 12 0 0 1 13 1.500M3.800 13A9 9 0 0 1 13 4.700M6.700 13A6 6 0 0 1 13 7.700" />
            <circle cx="11.500" cy="11.800" r="1.200" fill="#fff" />
            <path d="M9 13a4 4 0 0 1 1-2.300" />
          </Icon>
        </Cell>
        <Cell w="w-[29px]">
          <Icon size={17} box={17} sw={1.100}>
            <path d="M1 6.300h2.300L6.500 3v11L3.300 10.700H1zM9 6.200a3.500 3.500 0 0 1 0 4.600M11.300 4.500a6 6 0 0 1 0 8M13.600 2.700a9 9 0 0 1 0 11.600" />
          </Icon>
        </Cell>
        <Cell w="w-[34px]">
          <svg width="23" height="14" viewBox="0 0 23 14" fill="none" stroke="#fff">
            <rect x=".5" y=".5" width="22" height="12.500" rx=".5" />
            <path d="M3 4h17M3 7h17" strokeDasharray="1.200 1.200" strokeWidth="1.200" />
            <path d="M3 10h2M6.500 10h10M18 10h2" />
          </svg>
        </Cell>
        <span className="ml-[6px] w-[51px] whitespace-nowrap text-[12px] tracking-[-0.35px]">11:47 AM</span>
        <svg width="17" height="17" viewBox="0 0 17 17" className="ml-4">
          <path d="M.5 1h16v12h-5.500L8.500 16 6 13H.5z" fill="#fff" />
          <path d="M3.500 4.500h10M3.500 7h10M3.500 9.500h6" stroke="#111" />
        </svg>
        <span className="mr-1 ml-[19px] h-[30px] w-px bg-[#555]" />
      </div>
    </div>
  );
}

export default function App() {
  return (
    <div className="relative flex h-[768px] w-[1366px] flex-col overflow-hidden font-['Open_Sans','Noto_Sans',sans-serif]">
      <TabStrip />
      <Toolbar />
      <div className="flex h-[668px] shrink-0">
        <div className="flex min-w-0 flex-1 flex-col">
          <Bookmarks />
          <main className="flex-1 bg-[linear-gradient(to_bottom_right,#276984,#b6e6d3)] pt-[24px] pl-[122px]">
            <LoginCard />
          </main>
        </div>
        <Sidebar />
      </div>
      <Taskbar />
      <Ink />
    </div>
  );
}
